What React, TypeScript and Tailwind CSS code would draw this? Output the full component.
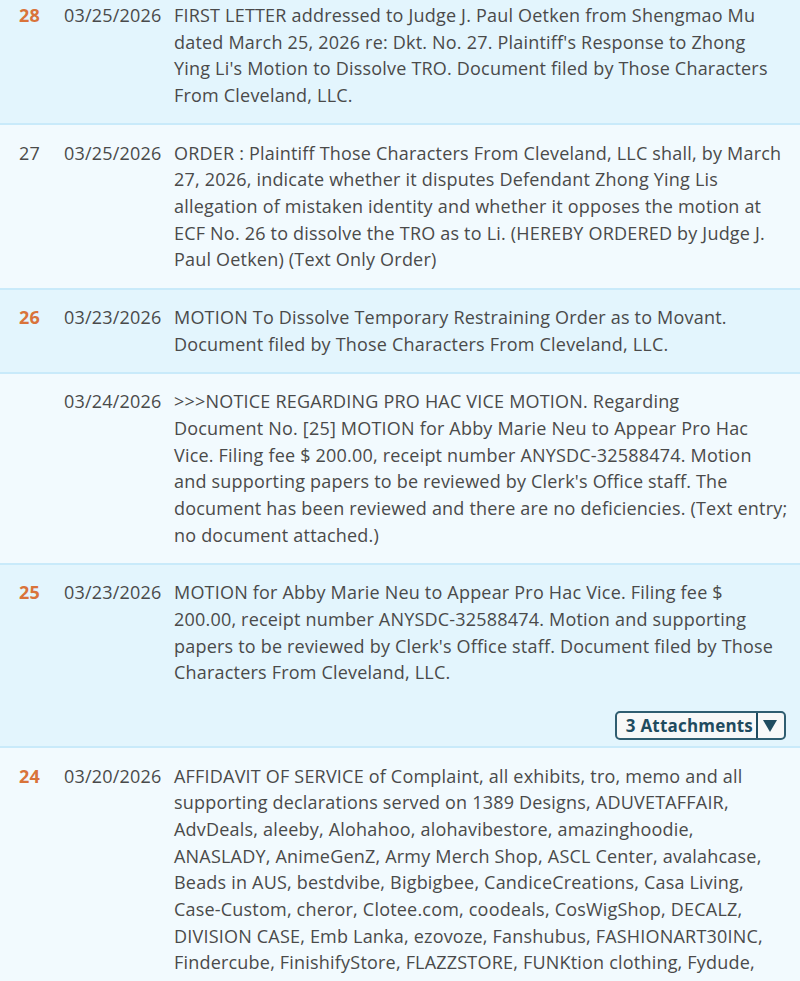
const ENTRIES = [
  {
    num: "28",
    linked: true,
    date: "03/25/2026",
    lines: [
      "FIRST LETTER addressed to Judge J. Paul Oetken from Shengmao Mu",
      "dated March 25, 2026 re: Dkt. No. 27. Plaintiff's Response to Zhong",
      "Ying Li's Motion to Dissolve TRO. Document filed by Those Characters",
      "From Cleveland, LLC.",
    ],
  },
  {
    num: "27",
    linked: false,
    date: "03/25/2026",
    lines: [
      "ORDER : Plaintiff Those Characters From Cleveland, LLC shall, by March",
      "27, 2026, indicate whether it disputes Defendant Zhong Ying Lis",
      "allegation of mistaken identity and whether it opposes the motion at",
      "ECF No. 26 to dissolve the TRO as to Li. (HEREBY ORDERED by Judge J.",
      "Paul Oetken) (Text Only Order)",
    ],
  },
  {
    num: "26",
    linked: true,
    date: "03/23/2026",
    lines: [
      "MOTION To Dissolve Temporary Restraining Order as to Movant.",
      "Document filed by Those Characters From Cleveland, LLC.",
    ],
  },
  {
    num: "",
    linked: false,
    date: "03/24/2026",
    lines: [
      ">>>NOTICE REGARDING PRO HAC VICE MOTION. Regarding",
      "Document No. [25] MOTION for Abby Marie Neu to Appear Pro Hac",
      "Vice. Filing fee $ 200.00, receipt number ANYSDC-32588474. Motion",
      "and supporting papers to be reviewed by Clerk's Office staff. The",
      "document has been reviewed and there are no deficiencies. (Text entry;",
      "no document attached.)",
    ],
  },
  {
    num: "25",
    linked: true,
    date: "03/23/2026",
    lines: [
      "MOTION for Abby Marie Neu to Appear Pro Hac Vice. Filing fee $",
      "200.00, receipt number ANYSDC-32588474. Motion and supporting",
      "papers to be reviewed by Clerk's Office staff. Document filed by Those",
      "Characters From Cleveland, LLC.",
    ],
    attachments: 3,
  },
  {
    num: "24",
    linked: true,
    date: "03/20/2026",
    lines: [
      "AFFIDAVIT OF SERVICE of Complaint, all exhibits, tro, memo and all",
      "supporting declarations served on 1389 Designs, ADUVETAFFAIR,",
      "AdvDeals, aleeby, Alohahoo, alohavibestore, amazinghoodie,",
      "ANASLADY, AnimeGenZ, Army Merch Shop, ASCL Center, avalahcase,",
      "Beads in AUS, bestdvibe, Bigbigbee, CandiceCreations, Casa Living,",
      "Case-Custom, cheror, Clotee.com, coodeals, CosWigShop, DECALZ,",
      "DIVISION CASE, Emb Lanka, ezovoze, Fanshubus, FASHIONART30INC,",
      "Findercube, FinishifyStore, FLAZZSTORE, FUNKtion clothing, Fydude,",
    ],
  },
];

function Row({ entry, shaded }: { entry: (typeof ENTRIES)[number]; shaded: boolean }) {
  return (
    <div
      className={`border-b-2 border-[#c9eafa] pt-[14.5px] pb-[14.5px] pr-[14px] ${
        shaded ? "bg-[#e3f5fd]" : "bg-[#f2fafe]"
      }`}
    >
      <div className="flex">
        <div
          className={`w-[40px] shrink-0 text-right ${
            entry.linked ? "font-bold text-[#d9733a]" : "text-[#4a4a4a]"
          }`}
        >
          {entry.num}
        </div>
        <div className="ml-[24px] w-[110px] shrink-0">{entry.date}</div>
        <div className="min-w-0 flex-1">
          {entry.lines.map((line, i) => (
            <div key={i} className="whitespace-nowrap">
              {line}
            </div>
          ))}
        </div>
      </div>
      {entry.attachments && (
        <div className="mt-[25px] -mb-[8.5px] flex justify-end">
          <button className="flex h-[29px] items-center rounded-[5px] border-2 border-[#2f5d70] bg-[#f7f8f8] pl-[9px] pr-[7px] text-[17px] font-bold leading-none tracking-[0.2px] text-[#1f4b5f]">
            <span className="pr-[3px]">{entry.attachments} Attachments</span>
            <span className="h-[25px] w-[2px] bg-[#1f4b5f]" />
            <svg viewBox="0 0 14 12" className="ml-[5px] h-[12px] w-[14px] fill-[#1f4b5f]">
              <path d="M0 0h14L7 12z" />
            </svg>
          </button>
        </div>
      )}
    </div>
  );
}

export default function App() {
  return (
    <div className="h-[981px] overflow-hidden bg-[#f2fafe] font-['Open_Sans',sans-serif] text-[18px] leading-[26.67px] tracking-[0.2px] text-[#4a4a4a]">
      <div className="-mt-[12.5px]">
        {ENTRIES.map((entry, i) => (
          <Row key={i} entry={entry} shaded={i % 2 === 0} />
        ))}
      </div>
    </div>
  );
}
